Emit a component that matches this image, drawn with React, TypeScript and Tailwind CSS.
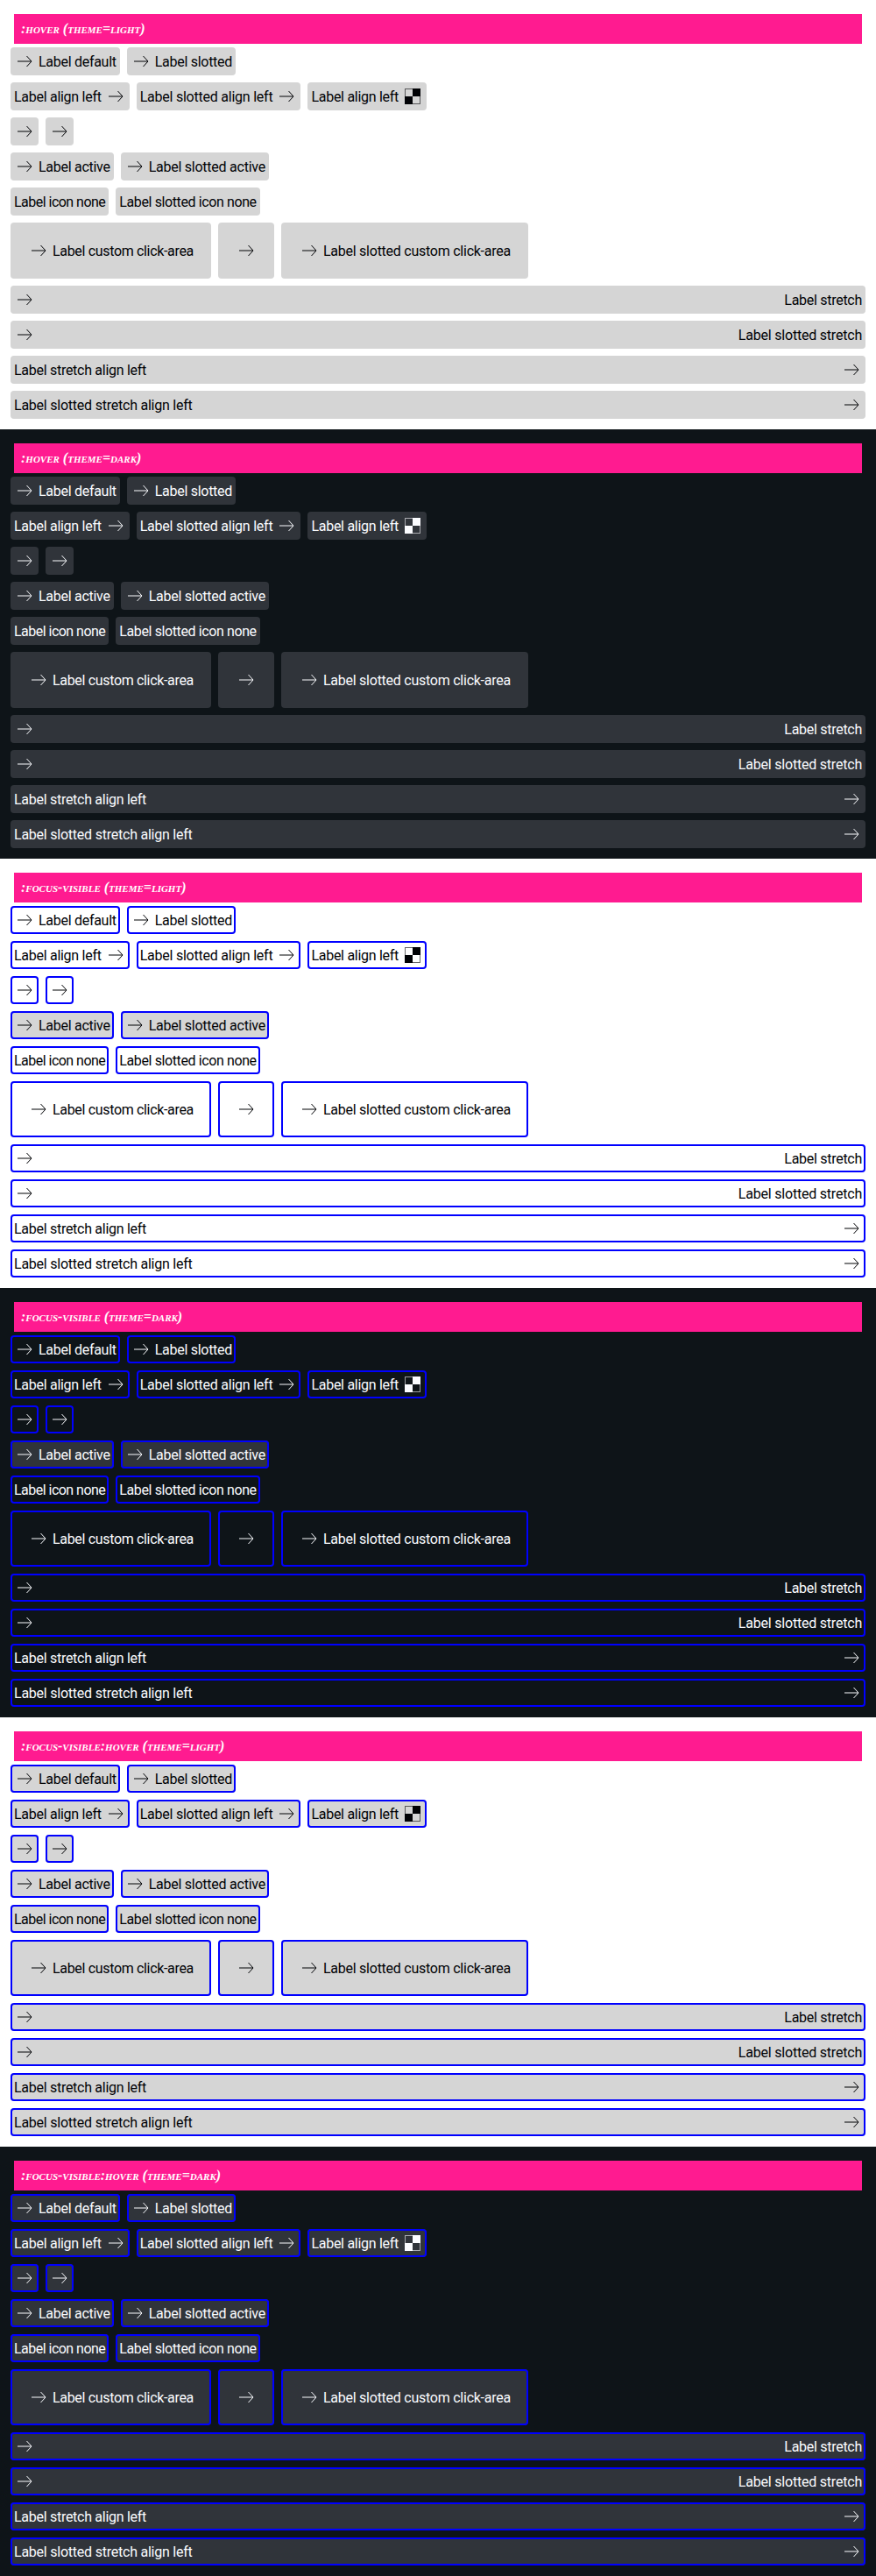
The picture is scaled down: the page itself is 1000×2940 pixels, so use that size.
type Theme = "light" | "dark";
type State = "hover" | "focus" | "focus-hover";
type IconKind = "arrow" | "none" | "checker";

type Btn = {
  label?: string;
  icon?: IconKind;
  iconEnd?: boolean;
  active?: boolean;
  large?: boolean;
  stretch?: boolean;
  track?: string;
};

const rows: Btn[][] = [
  [{ label: "Label default" }, { label: "Label slotted" }],
  [
    { label: "Label align left", iconEnd: true },
    { label: "Label slotted align left", iconEnd: true, track: "tracking-[-0.23px]" },
    { label: "Label align left", iconEnd: true, icon: "checker" },
  ],
  [{}, {}],
  [
    { label: "Label active", active: true },
    { label: "Label slotted active", active: true, track: "tracking-[-0.245px]" },
  ],
  [
    { label: "Label icon none", icon: "none", track: "tracking-[-0.52px]" },
    { label: "Label slotted icon none", icon: "none", track: "tracking-[-0.39px]" },
  ],
  [
    { label: "Label custom click-area", large: true, track: "tracking-[-0.33px]" },
    { large: true },
    { label: "Label slotted custom click-area", large: true, track: "tracking-[-0.25px]" },
  ],
  [{ label: "Label stretch", stretch: true }],
  [{ label: "Label slotted stretch", stretch: true, track: "tracking-[-0.21px]" }],
  [{ label: "Label stretch align left", stretch: true, iconEnd: true }],
  [{ label: "Label slotted stretch align left", stretch: true, iconEnd: true, track: "tracking-[-0.23px]" }],
];

const sections: { title: string; theme: Theme; state: State }[] = [
  { title: ":hover (theme=light)", theme: "light", state: "hover" },
  { title: ":hover (theme=dark)", theme: "dark", state: "hover" },
  { title: ":focus-visible (theme=light)", theme: "light", state: "focus" },
  { title: ":focus-visible (theme=dark)", theme: "dark", state: "focus" },
  { title: ":focus-visible:hover (theme=light)", theme: "light", state: "focus-hover" },
  { title: ":focus-visible:hover (theme=dark)", theme: "dark", state: "focus-hover" },
];

function ArrowIcon() {
  return (
    <svg viewBox="0 0 24 24" className="h-6 w-6 shrink-0" fill="none" stroke="currentColor" strokeWidth="1">
      <path d="M4 12h15.5M14.5 6l5.5 6-5.5 6" />
    </svg>
  );
}

function CheckerIcon() {
  return (
    <svg viewBox="0 0 24 24" className="h-6 w-6 shrink-0" fill="currentColor">
      <rect x="3.5" y="3.5" width="17" height="17" fill="none" stroke="currentColor" strokeOpacity="0.6" />
      <rect x="12" y="3" width="9" height="9" />
      <rect x="3" y="12" width="9" height="9" />
    </svg>
  );
}

function Button({ btn, theme, state }: { btn: Btn; theme: Theme; state: State }) {
  const filled = state !== "focus" || btn.active;
  const icon = btn.icon === "none" ? null : btn.icon === "checker" ? <CheckerIcon /> : <ArrowIcon />;

  return (
    <button
      type="button"
      className={[
        "flex items-center gap-1 rounded text-base leading-6 whitespace-nowrap",
        btn.large ? "p-5" : "p-1",
        btn.stretch ? "w-full justify-between" : "",
        theme === "light" ? "text-[#010205]" : "text-[#fbfcff]",
        filled ? (theme === "light" ? "bg-[#d5d5d5]" : "bg-[#30343a]") : "",
        state !== "hover" ? "outline-2 -outline-offset-2 outline-[#0000ff]" : "",
      ].join(" ")}
    >
      {!btn.iconEnd && icon}
      {btn.label && <span className={`translate-y-px ${btn.track ?? "tracking-[-0.28px]"}`}>{btn.label}</span>}
      {btn.iconEnd && icon}
    </button>
  );
}

function Section({ title, theme, state }: { title: string; theme: Theme; state: State }) {
  return (
    <section className={`h-[490px] px-3 pt-4 pb-3 ${theme === "light" ? "bg-white" : "bg-[#0e1418]"}`}>
      <h2 className="mx-1 mb-1 flex h-[34px] items-center bg-[#ff1b90] px-2 text-base font-bold italic text-white [font-family:'Liberation_Serif',serif] [font-variant:small-caps]">
        {title}
      </h2>
      <div className="flex flex-col gap-2">
        {rows.map((row, i) => (
          <div key={i} className="flex gap-2">
            {row.map((btn, j) => (
              <Button key={j} btn={btn} theme={theme} state={state} />
            ))}
          </div>
        ))}
      </div>
    </section>
  );
}

export default function App() {
  return (
    <div className="[font-family:Roboto,sans-serif]">
      {sections.map((s) => (
        <Section key={s.title} {...s} />
      ))}
    </div>
  );
}
